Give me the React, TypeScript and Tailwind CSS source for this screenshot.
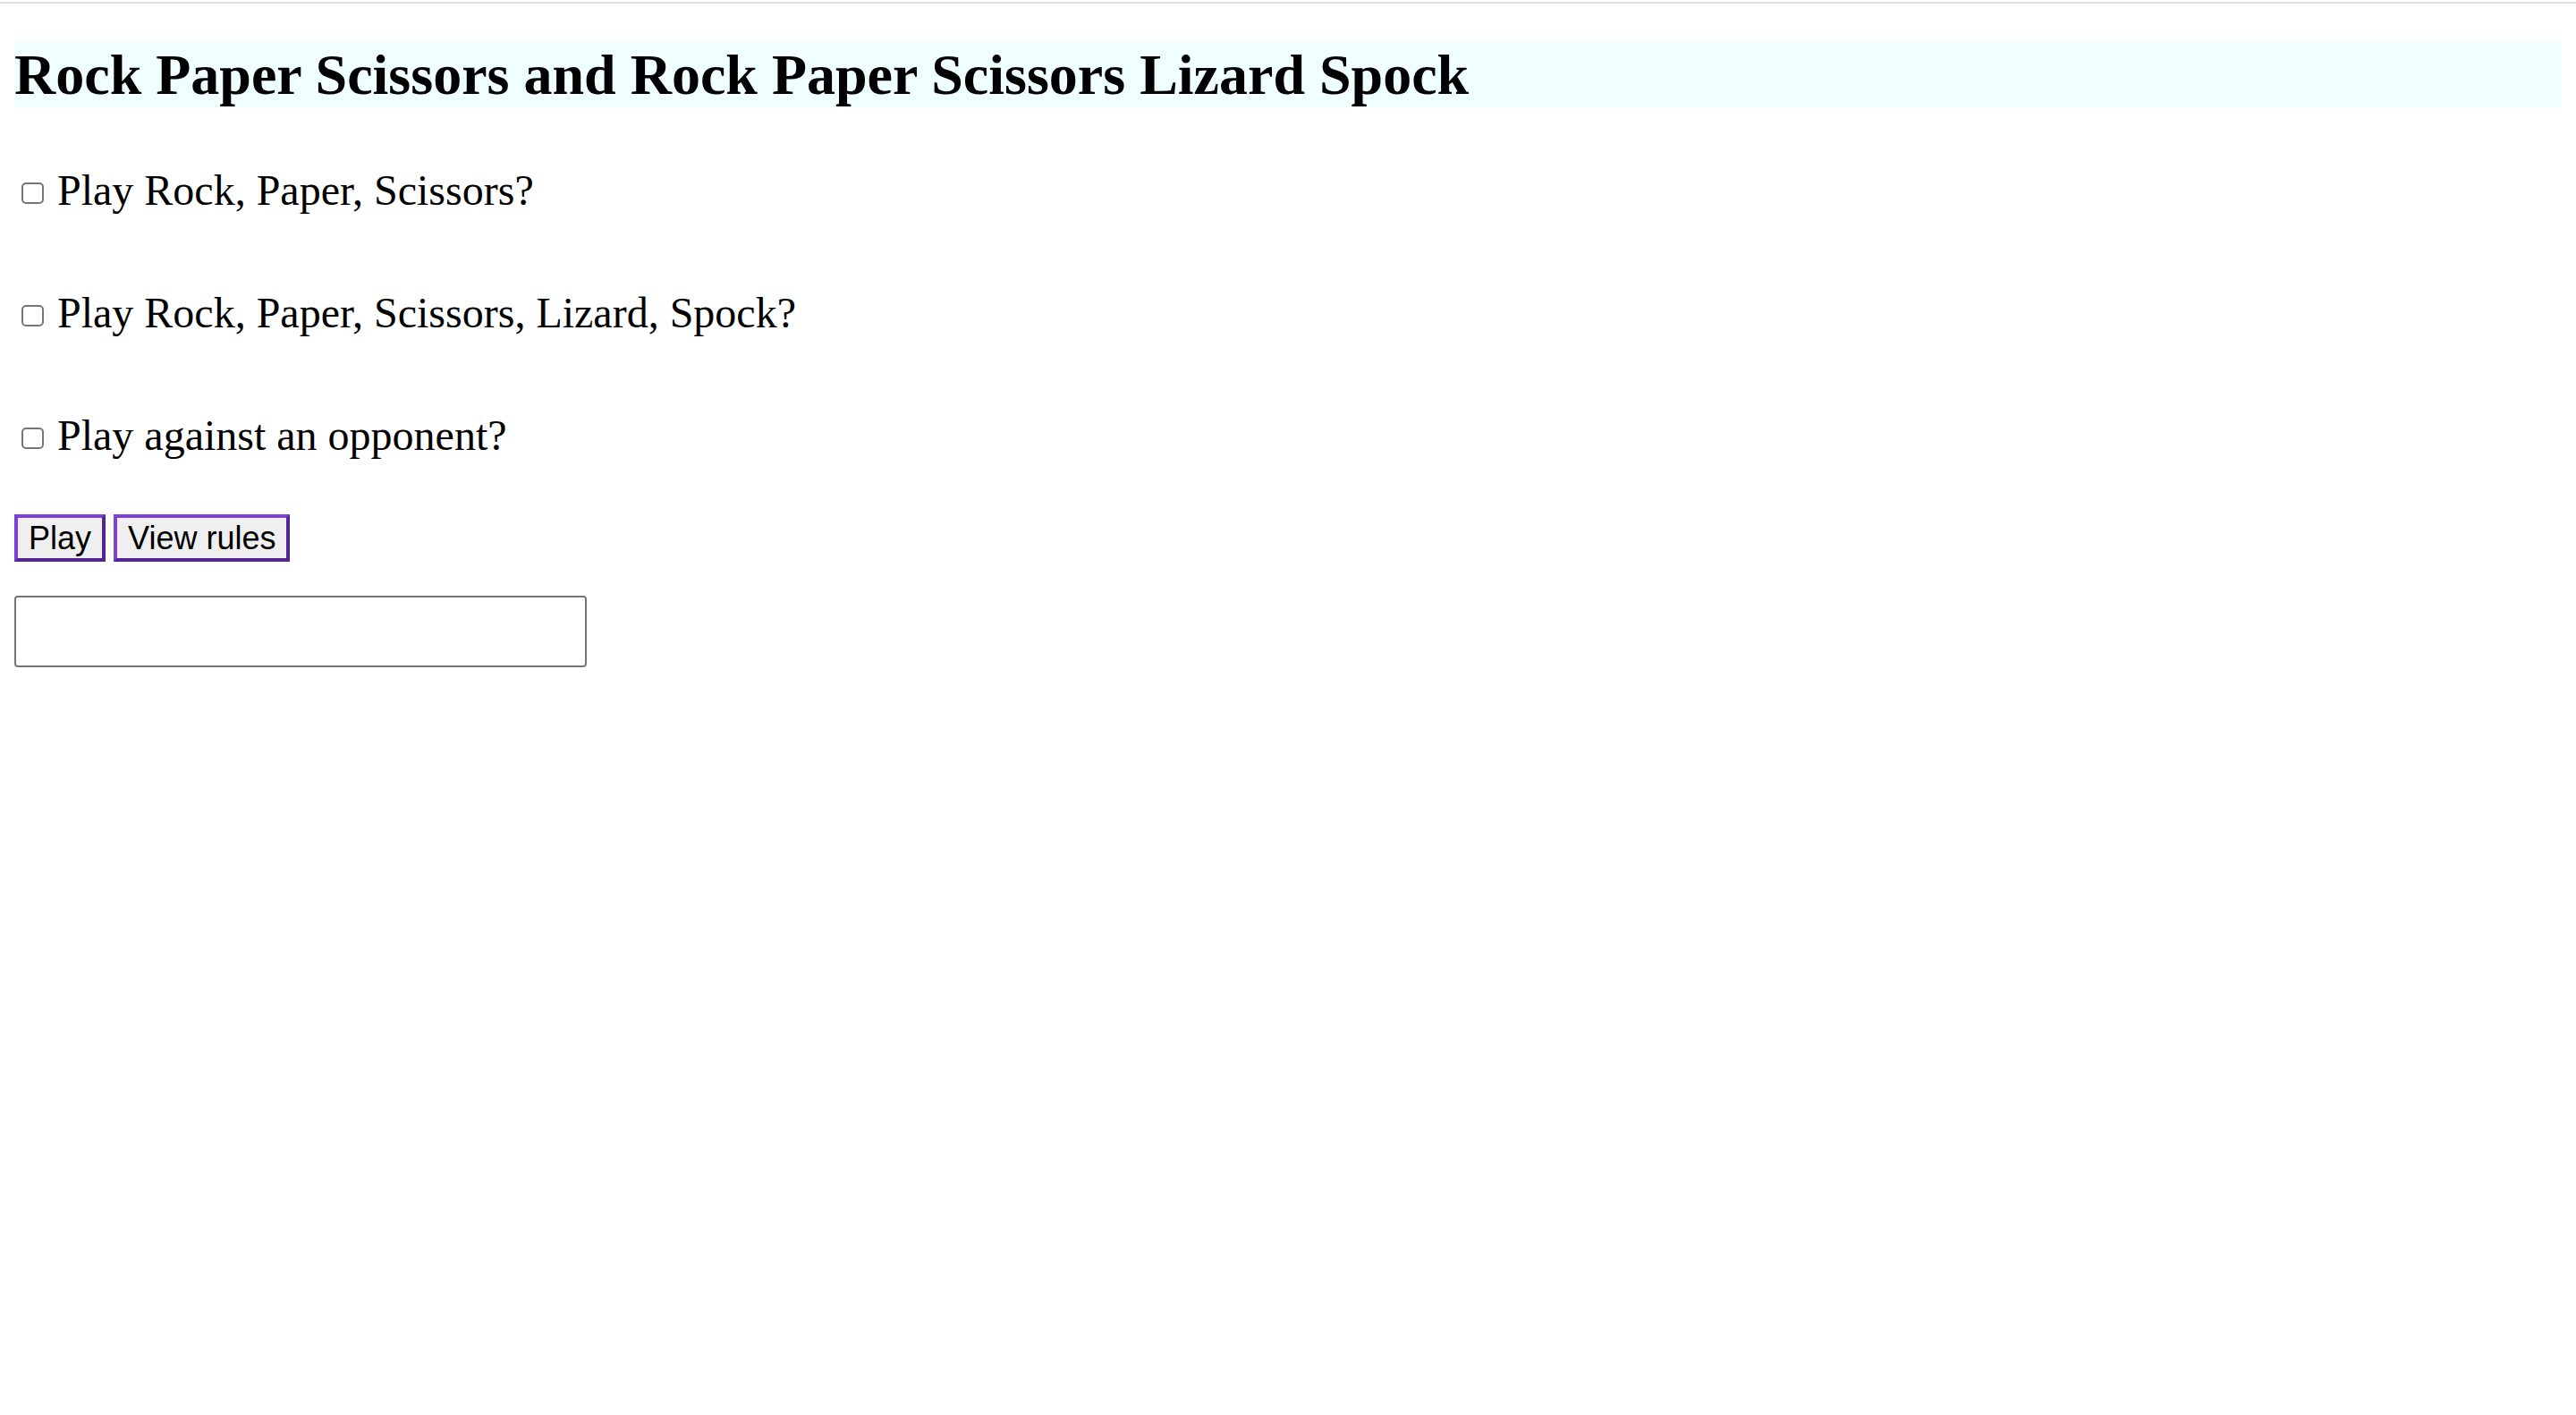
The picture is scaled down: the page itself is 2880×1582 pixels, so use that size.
const serif = "font-['Liberation_Serif','Times_New_Roman',serif]";
const sans = "font-['Liberation_Sans',Arial,sans-serif]";

const options = [
  'Play Rock, Paper, Scissors?',
  'Play Rock, Paper, Scissors, Lizard, Spock?',
  'Play against an opponent?',
];

function Option({ label }: { label: string }) {
  return (
    <label className="flex items-start h-[55px] text-[48px] leading-[55px] text-black">
      <input
        type="checkbox"
        className="appearance-none mt-[19px] ml-[8px] mr-[15px] w-[25px] h-[24px] shrink-0 border-2 border-[#767676] rounded-[5px] bg-white"
      />
      <span>{label}</span>
    </label>
  );
}

function GameButton({ children }: { children: React.ReactNode }) {
  return (
    <button
      className={`${sans} h-[53px] px-[12px] py-[2px] text-[36px] leading-[41px] text-black bg-[#efefef] border-4 border-t-[#7d3fd9] border-l-[#7d3fd9] border-b-[#52258f] border-r-[#52258f]`}
    >
      {children}
    </button>
  );
}

export default function App() {
  return (
    <div className={`${serif} min-h-screen bg-white`}>
      <div className="h-[2px] mt-[2px] bg-[#dedede]" />
      <div className="px-[16px]">
        <h1 className="mt-[43px] h-[73px] bg-[#f0ffff] text-[64px] leading-[73px] font-bold text-black">
          Rock Paper Scissors and Rock Paper Scissors Lizard Spock
        </h1>

        <div className="mt-[65px] flex flex-col gap-[82px]">
          {options.map((label) => (
            <Option label={label} key={label} />
          ))}
        </div>

        <div className="mt-[61px] flex gap-[9px]">
          <GameButton>Play</GameButton>
          <GameButton>View rules</GameButton>
        </div>

        <input
          type="text"
          className="block mt-[38px] w-[640px] h-[80px] border-2 border-[#767676] rounded-[4px] bg-white"
        />
      </div>
    </div>
  );
}
